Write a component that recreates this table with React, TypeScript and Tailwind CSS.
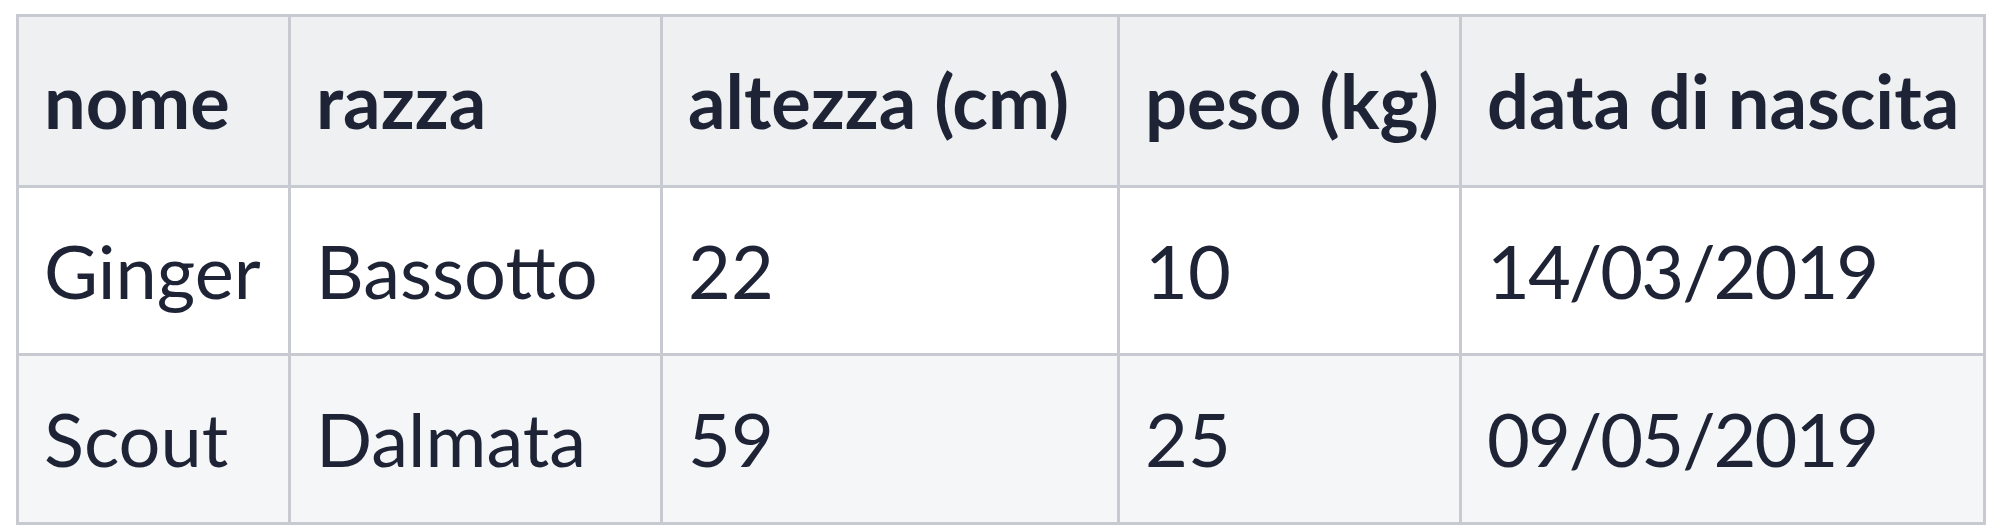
import React from 'react';

const columns = ['nome', 'razza', 'altezza (cm)', 'peso (kg)', 'data di nascita'];

const rows = [
  ['Ginger', 'Bassotto', '22', '10', '14/03/2019'],
  ['Scout', 'Dalmata', '59', '25', '09/05/2019'],
];

export default function App() {
  return (
    <div className="min-h-screen bg-white pt-[14px] pl-[16px] font-['Lato','Noto_Sans',sans-serif] text-[#1e2435]">
      <table className="table-fixed border-collapse w-[1967px] text-[74px] leading-none">
        <colgroup>
          <col className="w-[272px]" />
          <col className="w-[372px]" />
          <col className="w-[457px]" />
          <col className="w-[342px]" />
          <col className="w-[524px]" />
        </colgroup>
        <thead>
          <tr className="h-[171px] bg-[#eef0f2]">
            {columns.map(c => (
              <th
                key={c}
                className="border-[3px] border-[#c7cad0] pl-[25px] pr-[10px] text-left align-middle font-bold whitespace-nowrap"
              >
                {c}
              </th>
            ))}
          </tr>
        </thead>
        <tbody>
          {rows.map((r, i) => (
            <tr key={r[0]} className={i === 0 ? 'h-[168px] bg-white' : 'h-[169px] bg-[#f4f6f8]'}>
              {r.map((v, j) => (
                <td
                  key={j}
                  className={
                    j === 4
                      ? 'border-[3px] border-[#c7cad0] pl-[25px] pr-[10px] text-left align-middle whitespace-nowrap tracking-[-2px]'
                      : 'border-[3px] border-[#c7cad0] pl-[25px] pr-[10px] text-left align-middle whitespace-nowrap'
                  }
                >
                  {v}
                </td>
              ))}
            </tr>
          ))}
        </tbody>
      </table>
    </div>
  );
}
